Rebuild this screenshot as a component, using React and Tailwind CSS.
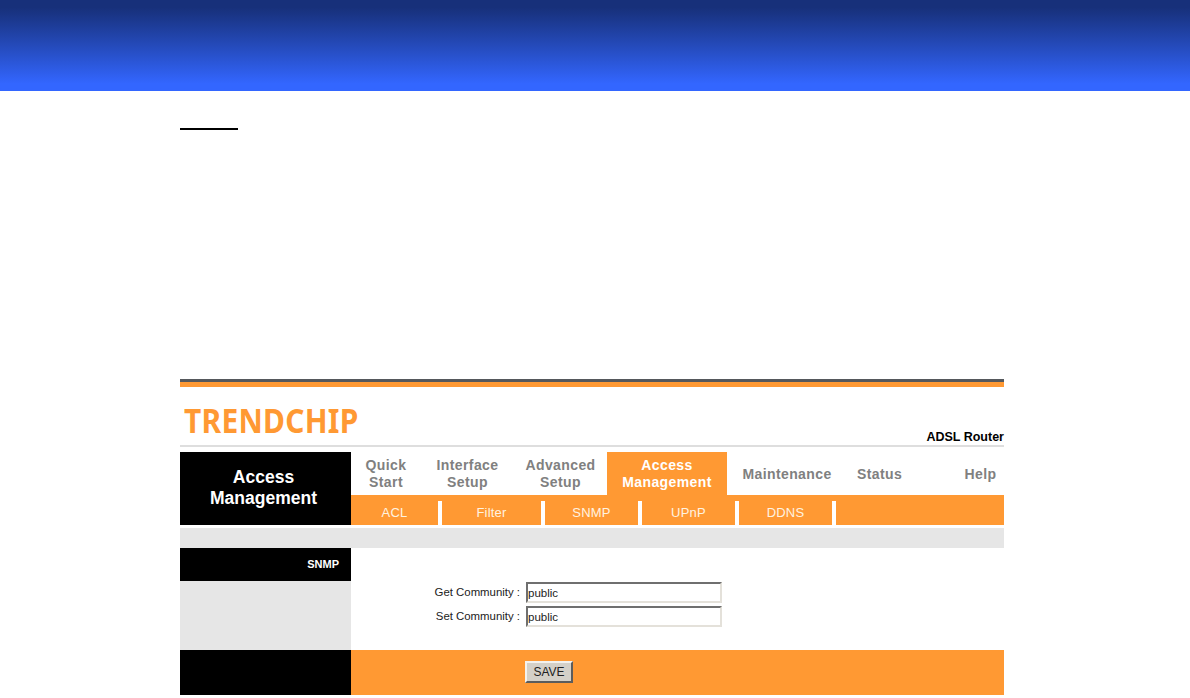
import React from "react";

const navItems = [
  { label: ["Quick", "Start"], width: "w-[70px]" },
  { label: ["Interface", "Setup"], width: "w-[93px]" },
  { label: ["Advanced", "Setup"], width: "w-[93px]" },
  { label: ["Access", "Management"], width: "w-[120px]", active: true },
  { label: ["Maintenance"], width: "w-[120px] pt-[2px]" },
  { label: ["Status"], width: "w-[65px] pt-[2px]" },
  { label: ["Help"], width: "w-[92px] pt-[2px] pl-[45px]" },
];

const subItems = [
  { label: "ACL", width: "w-[91px]" },
  { label: "Filter", width: "w-[103px]" },
  { label: "SNMP", width: "w-[97px]" },
  { label: "UPnP", width: "w-[97px]" },
  { label: "DDNS", width: "w-[97px]" },
];

const Field = ({ label, className = "" }) => (
  <div className={`flex items-center ${className}`}>
    <label className="w-[169px] pt-[1px] text-right text-[11.4px] text-[#222]">{label}</label>
    <input
      readOnly
      value="public"
      className="ml-[6px] h-[21px] w-[196px] border-2 border-t-[#6f6f6f] border-l-[#6f6f6f] border-r-[#e4e1da] border-b-[#e4e1da] bg-white text-[11.5px] text-[#222] outline-none"
    />
  </div>
);

const App = () => {
  return (
    <div className="h-[698px] w-[1190px] overflow-hidden bg-white font-['Liberation_Sans',Arial,sans-serif]">
      <div className="h-[91px] bg-gradient-to-b from-[#17307a] from-[8%] to-[#3366ff] to-[92%]" />

      <div className="ml-[180px] w-[824px]">
        <div className="mt-[37px] h-[2px] w-[58px] bg-black" />

        {/* Router page */}
        <div className="mt-[249px]">
          <div className="h-[3px] bg-[#55585c]" />
          <div className="h-[5px] bg-[#ff9933]" />

          <div className="flex h-[60px] items-end justify-between border-b-2 border-[#dedede]">
            <span className="mb-[5px] ml-[4px] origin-left scale-x-[0.88] font-['Noto_Sans',sans-serif] text-[34px] leading-[40px] font-bold tracking-[0.3px] text-[#ff9933]">
              TRENDCHIP
            </span>
            <span className="mb-[1px] text-[12.5px] leading-[14px] font-bold text-black">ADSL Router</span>
          </div>

          <div className="mt-[5px] flex">
            <div className="flex h-[73px] w-[171px] items-center justify-center bg-black pr-[4px] pb-[2px] text-center text-[17.5px] leading-[21px] font-bold text-white">
              <div>
                Access
                <br />
                Management
              </div>
            </div>
            <div className="flex-1">
              <div className="flex h-[43px]">
                {navItems.map((item) => (
                  <div
                    key={item.label[0]}
                    className={`flex flex-col items-center justify-center text-[14px] leading-[17px] font-bold tracking-[0.4px] ${item.width} ${
                      item.active ? "bg-[#ff9933] text-white" : "text-[#808080]"
                    }`}
                  >
                    {item.label.map((line) => (
                      <span key={line}>{line}</span>
                    ))}
                  </div>
                ))}
              </div>
              <div className="flex h-[30px] items-end bg-[#ff9933]">
                {subItems.map((item) => (
                  <div
                    key={item.label}
                    className={`flex h-[24px] items-center justify-center border-r-4 border-white pb-[1px] text-[13px] tracking-[0.2px] text-[#fff3e0] ${item.width}`}
                  >
                    {item.label}
                  </div>
                ))}
              </div>
            </div>
          </div>

          <div className="mt-[3px] h-[20px] bg-[#e6e6e6]" />

          <div className="flex">
            <div className="w-[171px]">
              <div className="flex h-[33px] items-center justify-end bg-black pr-[12px] text-[11px] font-bold text-white">
                SNMP
              </div>
              <div className="h-[69px] bg-[#e6e6e6]" />
            </div>
            <div className="flex-1 pt-[34px]">
              <Field label="Get Community :" />
              <Field label="Set Community :" className="mt-[3px]" />
            </div>
          </div>

          <div className="flex h-[45px]">
            <div className="w-[171px] bg-black" />
            <div className="flex flex-1 items-start bg-[#ff9933] pt-[11px] pl-[174px]">
              <button className="h-[22px] w-[48px] border-2 border-t-[#f4f2ee] border-l-[#f4f2ee] border-r-[#5c5c5c] border-b-[#5c5c5c] bg-[#d4d0c8] text-[12px] leading-[14px] text-[#222]">
                SAVE
              </button>
            </div>
          </div>
        </div>
      </div>
    </div>
  );
};

export default App;
